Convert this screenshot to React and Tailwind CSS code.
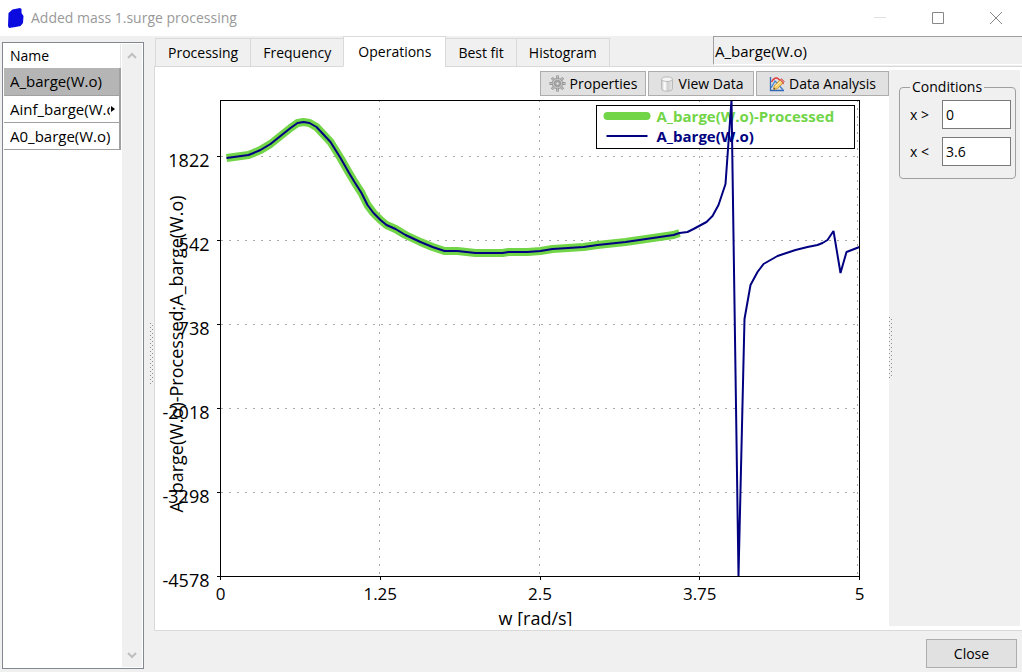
import { useState } from "react";

const series = ["A_barge(W.o)", "Ainf_barge(W.o)", "A0_barge(W.o)"];
const tabs = ["Processing", "Frequency", "Operations", "Best fit", "Histogram"];

const yTicks = [1822, 542, -738, -2018, -3298, -4578];
const xTicks = [0, 1.25, 2.5, 3.75, 5];

// curve inside the plot frame (639 x 476)
const processed =
  "6,58 28,55 33,53 40,50 50,44 60,36 70,28 77,23 83,22 89,23 96,27 110,42 120,58 128,72 134,82 141,93 147,105 153,113 160,120 166,125 175,129 185,135 200,142 212,147 224,151 237,151 255,153 282,153 288,152 307,152 320,151 332,149 363,147 377,145 405,142 453,135 459,133";
const raw =
  processed +
  " 467,132 473,129 486,122 492,116 498,105 505,84 511,0 518,476 524,219 530,185 537,172 543,164 557,156 575,150 587,147 597,145 602,143 607,140 613,131 620,173 626,152 639,147";

function GearIcon() {
  return (
    <svg width="17" height="17" viewBox="0 0 16 16" className="shrink-0" aria-hidden="true">
      <g stroke="#8a8a8a" strokeWidth="2.6">
        <path d="M8 .5v15M.5 8h15M2.7 2.7l10.6 10.6M13.3 2.7L2.7 13.3" />
      </g>
      <g stroke="#c6c6c6" strokeWidth="1.4">
        <path d="M8 1v14M1 8h14M3.1 3.1l9.8 9.8M12.9 3.1l-9.8 9.8" />
      </g>
      <circle cx="8" cy="8" r="5" fill="#c2c2c2" stroke="#959595" strokeWidth=".8" />
      <circle cx="8" cy="8" r="2.9" fill="#a9a9a9" stroke="#8a8a8a" strokeWidth=".7" />
      <circle cx="8" cy="8" r="1.5" fill="#e1e1e1" stroke="#999" strokeWidth=".6" />
    </svg>
  );
}

function CylinderIcon() {
  return (
    <svg width="16" height="16" viewBox="0 0 16 16" className="shrink-0" aria-hidden="true">
      <defs>
        <linearGradient id="cyl">
          <stop offset="0" stopColor="#c9c9c9" />
          <stop offset=".3" stopColor="#fff" />
          <stop offset=".55" stopColor="#d0d0d0" />
          <stop offset="1" stopColor="#e6e6e6" />
        </linearGradient>
      </defs>
      <path d="M2.5 3.2v9.6c0 1.4 2.5 2.4 5.5 2.4s5.5-1 5.5-2.4V3.2z" fill="url(#cyl)" stroke="#b0b0b0" strokeWidth=".8" />
      <ellipse cx="8" cy="3.2" rx="5.5" ry="2.3" fill="#f4f4f4" stroke="#b0b0b0" strokeWidth=".8" />
    </svg>
  );
}

function AnalysisIcon() {
  return (
    <svg width="16" height="16" viewBox="0 0 16 16" fill="none" className="shrink-0" aria-hidden="true">
      <path d="M1.5 1v13.5H15" stroke="#3469b8" strokeWidth="1.3" />
      <path d="M2 12l4-7 3 3 5 6" stroke="#3f7fd0" strokeWidth="1.3" />
      <path d="M2.5 6c2-4 5-5 7-3l5 5" stroke="#e23b3b" strokeWidth="1.5" />
      <path d="M4.5 13.5l.7-3.8L11 4l3 3-5.700 5.800z" fill="#f5cf6c" stroke="#c08a2c" strokeWidth=".8" />
      <path d="M6.500 10.500L12 5.200" stroke="#fff0b5" strokeWidth="1" />
      <path d="M11 4l1.500-1.500 3 3L14 7z" fill="#e98078" stroke="#b8504a" strokeWidth=".6" />
      <path d="M4.500 13.500l.4-2 1.500 1.500z" fill="#444" />
    </svg>
  );
}

function ToolButton({ icon, className, children }) {
  return (
    <button className={"flex h-[25px] items-center justify-center gap-1 border border-[#adadad] bg-[#e1e1e1] whitespace-nowrap " + className}>
      {icon}
      {children}
    </button>
  );
}

function Splitter() {
  return (
    <svg width="4" height="62" aria-hidden="true">
      <defs>
        <pattern id="grip" width="4" height="4" patternUnits="userSpaceOnUse">
          <path d="M0 0h1v1H0zM2 2h1v1H2z" fill="#8f8f8f" />
        </pattern>
      </defs>
      <rect width="4" height="62" fill="url(#grip)" />
    </svg>
  );
}

function Chart() {
  return (
    <svg viewBox="0 0 733 530" className="block min-h-0 w-full flex-1" fontSize="18" role="img" aria-label="A_barge(W.o) against w">
      <g transform="translate(65 4)">
        <g stroke="#a8a8a8" strokeDasharray="2 6" shapeRendering="crispEdges">
          {yTicks.slice(0, -1).map((t, i) => (
            <line key={t} x1="0" x2="639" y1={56 + i * 84} y2={56 + i * 84} />
          ))}
          {xTicks.slice(1).map((t, i) => (
            <line key={t} y1="0" y2="476" x1={159 + i * 160 - (i === 3 ? 2 : 0)} x2={159 + i * 160 - (i === 3 ? 2 : 0)} />
          ))}
        </g>

        <rect x="376" y="5" width="258" height="43" fill="#fff" stroke="#000" shapeRendering="crispEdges" />
        <g fontWeight="bold" fontSize="15">
          <line x1="387" x2="426" y1="16" y2="16" stroke="#72d548" strokeWidth="8" strokeLinecap="round" />
          <text x="436" y="22" fill="#72d548">A_barge(W.o)-Processed</text>
          <line x1="386" x2="427" y1="36" y2="36" stroke="#000080" strokeWidth="2" />
          <text x="436" y="42" fill="#000080">A_barge(W.o)</text>
        </g>

        <polyline points={processed} fill="none" stroke="#72d548" strokeWidth="8" strokeLinejoin="round" />
        <polyline points={raw} fill="none" stroke="#000080" strokeWidth="2" strokeLinejoin="bevel" />

        <rect x="0" y="0" width="639" height="476" fill="none" stroke="#000" shapeRendering="crispEdges" />
        <g stroke="#000" shapeRendering="crispEdges">
          {yTicks.map((t, i) => <line key={t} x1="-4" x2="0" y1={56 + i * 84} y2={56 + i * 84} />)}
          {xTicks.map((t, i) => <line key={t} y1="476" y2="480" x1={i * 639 / 4} x2={i * 639 / 4} />)}
        </g>

        {yTicks.map((t, i) => (
          <text key={t} x="-11" y={67 + i * 84} textAnchor="end">{t}</text>
        ))}
        {xTicks.map((t, i) => (
          <text key={t} x={i * 639 / 4} y="500" fontSize="17" textAnchor="middle">{t}</text>
        ))}
        <text x="315" y="525" textAnchor="middle">w [rad/s]</text>
        <text transform="translate(-38 254) rotate(-90)" textAnchor="middle">A_barge(W.o)-Processed;A_barge(W.o)</text>
      </g>
    </svg>
  );
}

export default function App() {
  const [tab, setTab] = useState("Operations");
  const [selected, setSelected] = useState(series[0]);
  const [min, setMin] = useState("0");
  const [max, setMax] = useState("3.6");

  return (
    <div className="flex h-screen flex-col bg-[#f0f0f0] font-['Open_Sans','Noto_Sans',sans-serif] text-sm text-black">
      <header className="flex h-9 shrink-0 items-center bg-white pl-2 text-[#999]">
        <svg width="16" height="20" viewBox="0 0 16 20" aria-hidden="true">
          <path d="M.5 5l4-3.500L12 0l1.500 1v4l2 3-.5 7-2.500 3-5 1-6.500 1L0 18z" fill="#0b0be0" />
        </svg>
        <h1 className="ml-[7px] flex-1">Added mass 1.surge processing</h1>
        <button aria-label="Minimize" className="px-6">
          <svg width="12" height="12"><path d="M0 5.500h12" stroke="#e0e0e0" /></svg>
        </button>
        <button aria-label="Maximize" className="px-[22px]">
          <svg width="12" height="12"><path d="M.5.5h11v11H.5z" fill="none" stroke="#888" /></svg>
        </button>
        <button aria-label="Close window" className="pr-5 pl-6">
          <svg width="12" height="12"><path d="M0 0l12 12M12 0L0 12" stroke="#888" /></svg>
        </button>
      </header>

      <div className="flex min-h-0 flex-1">
        <aside className="mt-1.5 mb-[3px] ml-0.5 flex w-[142px] shrink-0 border border-[#828790] bg-white p-px">
          <div className="min-w-0 flex-1">
            <table className="w-[117px] table-fixed border-collapse text-left">
              <thead>
                <tr className="h-6"><th className="border-r border-[#e5e5e5] pl-1.5 font-normal">Name</th></tr>
              </thead>
              <tbody className="text-[15px] leading-5">
                {series.map(s => (
                  <tr key={s} onClick={() => setSelected(s)}
                    className={"h-[27px] border-r-2 border-b border-[#a0a0a0] " + (s === selected ? "bg-[#b5b5b5]" : "")}>
                    <td className="pl-1.5">
                      <div className="flex items-center">
                        <span className="min-w-0 overflow-hidden whitespace-nowrap">{s}</span>
                        {s.length > 14 && (
                          <svg width="5" height="8" className="mr-1 shrink-0" aria-hidden="true"><path d="M1 1l4 3-4 3z" /></svg>
                        )}
                      </div>
                    </td>
                  </tr>
                ))}
              </tbody>
            </table>
          </div>
          <div className="flex w-5 flex-col items-center justify-between bg-[#f0f0f0] py-2">
            <svg width="10" height="7" fill="none" stroke="#bfbfbf" strokeWidth="2"><path d="M1 6l4-4 4 4" /></svg>
            <svg width="10" height="7" fill="none" stroke="#bfbfbf" strokeWidth="2"><path d="M1 1l4 4 4-4" /></svg>
          </div>
        </aside>

        <div className="flex w-2.5 shrink-0 items-center justify-end"><Splitter /></div>

        <main className="flex min-w-0 flex-1 flex-col">
          <div className="flex h-[31px] shrink-0 items-end justify-between">
            <div role="tablist" className="relative z-10 flex items-end pl-px">
              {tabs.map(t => (
                <button key={t} role="tab" aria-selected={t === tab} onClick={() => setTab(t)}
                  className={"-mr-px border border-[#d9d9d9] whitespace-nowrap " +
                    (t === tab ? "h-[31px] border-b-white bg-white px-3.5" : "h-[29px] bg-[#f0f0f0] px-3")}>
                  {t}
                </button>
              ))}
            </div>
            <div className="mb-0.5 h-[29px] w-[309px] border-t border-l border-b border-[#a0a0a0] border-b-white pt-1 pl-px text-[15px] leading-5">{selected}</div>
          </div>

          <div className="-mt-px flex min-h-0 flex-1 border border-r-0 border-[#d9d9d9] bg-white pb-1">
            <section className="flex min-w-0 flex-1 flex-col pt-1">
              <div className="flex shrink-0 justify-end gap-0.5">
                <ToolButton icon={<GearIcon />} className="w-[106px]">Properties</ToolButton>
                <ToolButton icon={<CylinderIcon />} className="w-[106px]">View Data</ToolButton>
                <ToolButton icon={<AnalysisIcon />} className="w-[133px]">Data Analysis</ToolButton>
              </div>
              <Chart />
            </section>

            <div className="mt-[3px] mr-0.5 flex w-[131px] shrink-0 bg-[#f0f0f0]">
              <div className="flex w-1.5 items-center"><Splitter /></div>
              <form className="ml-1 flex-1 pt-1.5 pr-1" onSubmit={e => e.preventDefault()}>
                <fieldset className="flex flex-col gap-2 rounded border border-[#a0a0a0] px-1 pt-0.5 pb-3">
                  <legend className="ml-1.5 px-0.5 leading-[22px]">Conditions</legend>
                  <label className="flex h-[29px] items-center justify-between pl-1.5">
                    x &gt;
                    <input type="text" value={min} onChange={e => setMin(e.target.value)}
                      className="h-full w-[69px] border border-[#7a7a7a] bg-white px-[3px]" />
                  </label>
                  <label className="flex h-[29px] items-center justify-between pl-1.5">
                    x &lt;
                    <input type="text" value={max} onChange={e => setMax(e.target.value)}
                      className="h-full w-[69px] border border-[#7a7a7a] bg-white px-[3px]" />
                  </label>
                </fieldset>
              </form>
            </div>
          </div>

          <footer className="flex h-[41px] shrink-0 items-center justify-end pt-2 pr-[5px] pb-1">
            <button className="h-[29px] w-[91px] border border-[#adadad] bg-[#e1e1e1]">Close</button>
          </footer>
        </main>
      </div>
    </div>
  );
}
